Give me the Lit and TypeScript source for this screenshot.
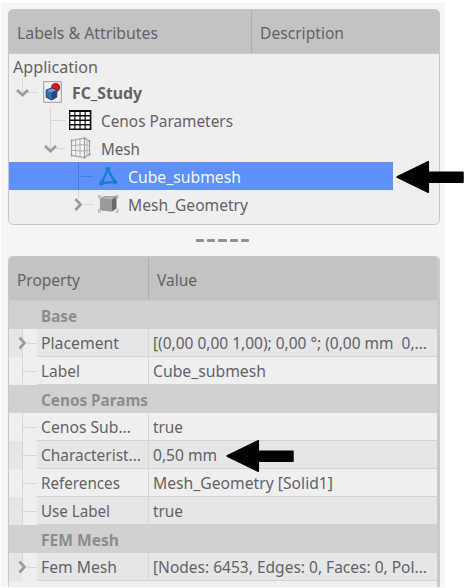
import { LitElement, html, svg, css, nothing } from "lit";
import { customElement, property } from "lit/decorators.js";

/* Text condensed or widened to an exact run width. */
@customElement("fit-text")
class FitText extends LitElement {
  @property() text = "";
  @property({ type: Number }) run = 0;
  static styles = css`
    :host { display: block; height: 24px; flex: none; }
    .t { display: inline-block; white-space: pre; line-height: 24px; transform-origin: 0 50%; }
  `;
  firstUpdated() {
    const t = this.renderRoot.querySelector(".t") as HTMLElement;
    const w = t.getBoundingClientRect().width;
    if (w > 0) t.style.transform = `scaleX(${this.run / w})`;
    this.style.width = `${this.run}px`;
  }
  render() {
    return html`<span class="t">${this.text}</span>`;
  }
}

const fit = (text: string, run: number) => html`<fit-text .text=${text} .run=${run}></fit-text>`;

const icons: Record<string, unknown> = {
  doc: svg`
    <rect x="0.6" y="0.6" width="17.8" height="20.8" rx="1" fill="#f1f1f1" stroke="#aaa" stroke-width="1.2"/>
    <circle cx="12.6" cy="6.6" r="4.6" fill="#d81620"/>
    <path d="M12 2.6a4.6 4.6 0 0 1 4 6" fill="none" stroke="#a5101a" stroke-width="1"/>
    <path d="M3.2 9.2 9 6.8l4.8 2.2v7L8.6 19l-5.4-2.8z" fill="#3b70aa" stroke="#1d3c66" stroke-width="1"/>
    <path d="M3.8 9.5 9 7.4l4.2 1.8-4.8 2z" fill="#729fcf"/>
    <path d="M8.6 11.5 13.6 9v7l-5 2.8z" fill="#204a87"/>`,
  table: svg`
    <rect x="0" y="0" width="22.4" height="20" fill="#0c0c0c"/>
    ${[0, 1, 2, 3].map((r) => [0, 1, 2, 3].map((c) =>
      svg`<rect x=${1.3 + c * 5.15} y=${2 + r * 4.5} width="4" height="3" fill="#fff"/>`))}`,
  mesh: svg`
    <path d="M1.5 3.5 14.5 1V20.5L1.5 18.5zM14.5 1 19.5 4V17.5L14.5 20.5" fill="#f4f4f4" stroke="#a0a0a0" stroke-width="1.2"/>
    <path d="M5.7 2.8V19M10 2V19.8M1.5 8.6 14.5 7.6 19.5 8.6M1.5 13.4 14.5 14 19.5 12.8M17 2.6V19" fill="none" stroke="#adadad" stroke-width="1"/>
    <g fill="#999"><circle cx="1.7" cy="3.6" r="1.1"/><circle cx="14.5" cy="1.4" r="1.2"/><circle cx="19.5" cy="4.3" r="1.1"/><circle cx="1.7" cy="18.3" r="1.1"/><circle cx="14.5" cy="20.4" r="1.2"/><circle cx="19.5" cy="17.4" r="1.1"/></g>`,
  tri: svg`
    <path d="M8.8 2.6 16 15 2.6 16z" fill="none" stroke="#1f7ecb" stroke-width="2.5"/>
    <g fill="#1a7bc8"><circle cx="8.8" cy="2.5" r="2.4"/><circle cx="16" cy="15.1" r="2.4"/><circle cx="2.6" cy="16" r="2.4"/></g>`,
  cube: svg`
    <path d="M.7 3.5V.8H3M17.5 .8h2.3V3.5M.7 14v2.8H3M17.5 16.8h2.3V14" fill="none" stroke="#aaa" stroke-width="1.2"/>
    <path d="M2.3 3.2 6 1.6H18.2V13.6L14 16.2 2.3 15z" fill="#9a9a9a" stroke="#858585" stroke-width=".6"/>
    <path d="M2.6 3.3 6 1.9H18L14 4.2z" fill="#b9b9b9"/>
    <path d="M14 4.2 18.2 1.8V13.5L14 16.1z" fill="#6a6a6a"/>`,
};

interface Node { label: string; run: number; gap: number; line: number; half: boolean; open?: string; icon: string; iw: number; ih: number; selected?: boolean; bold?: boolean; }

/* gap: distance from the tree's left edge to the icon; line: x of the branch line. */
const nodes: Node[] = [
  { label: "FC_Study", run: 70, gap: 34, line: 13, half: true, open: "down", icon: "doc", iw: 19, ih: 22, bold: true },
  { label: "Cenos Parameters", run: 132, gap: 60, line: 41, half: false, icon: "table", iw: 22.5, ih: 20 },
  { label: "Mesh", run: 39, gap: 61, line: 41, half: true, open: "down", icon: "mesh", iw: 21, ih: 22 },
  { label: "Cube_submesh", run: 113, gap: 90, line: 69, half: false, icon: "tri", iw: 19, ih: 19, selected: true },
  { label: "Mesh_Geometry", run: 120, gap: 89, line: 69, half: true, open: "right", icon: "cube", iw: 20.5, ih: 18 },
];

interface Prop { name: string; run: number; value?: string; vrun?: number; group?: boolean; alt?: boolean; open?: boolean; }
const props: Prop[] = [
  { name: "Base", run: 36, group: true },
  { name: "Placement", run: 78, value: "[(0,00 0,00 1,00); 0,00 °; (0,00 mm  0,...", vrun: 274, alt: true, open: true },
  { name: "Label", run: 39, value: "Cube_submesh", vrun: 113 },
  { name: "Cenos Params", run: 107, group: true },
  { name: "Cenos Sub...", run: 90, value: "true", vrun: 30 },
  { name: "Characterist...", run: 100, value: "0,50 mm", vrun: 64, alt: true },
  { name: "References", run: 79, value: "Mesh_Geometry [Solid1]", vrun: 180 },
  { name: "Use Label", run: 69, value: "true", vrun: 30, alt: true },
  { name: "FEM Mesh", run: 78, group: true },
  { name: "Fem Mesh", run: 76, value: "[Nodes: 6453, Edges: 0, Faces: 0, Pol...", vrun: 274, alt: true, open: true },
];

@customElement("app-root")
class AppRoot extends LitElement {
  static styles = css`
    :host { display: block; width: 467px; height: 588px; background: #fff; overflow: hidden; position: relative;
      font: 16.7px "Noto Sans", "Open Sans", sans-serif; color: #626267; }
    * { box-sizing: border-box; }
    svg { display: block; flex: none; }
    .dock { width: 444px; height: 584px; margin: 0 0 0 1px; background: #f5f5f5; padding: 6px 5px 0 7px; overflow: hidden; }
    .page { padding-top: 3px; }
    .panel { border: 1px solid #c6c6c6; border-radius: 5px; overflow: hidden; background: #efefef; }
    .tree { height: 216px; }
    .head { display: grid; align-items: center; background: #c3c3c3; border-bottom: 1px solid #cbcbcb; height: 44px; }
    .tree .head { grid-template-columns: 242px 1fr; }
    .table .head { grid-template-columns: 139px 1fr; }
    .head > div { height: 100%; display: flex; align-items: center; padding: 2px 0 0 8px; }
    .head > div + div { border-left: 1px solid #adadad; }
    .app { height: 24px; padding: 1px 0 0 4px; }
    .node { height: 28px; display: flex; align-items: center; width: 383.5px; }
    .node .text { margin-left: 9.5px; padding-top: 2px; }
    .node.selected { background: #5e90fa; color: #f4f7ff; }
    .bold { font-weight: 700; }
    .guide { stroke: #d6d6d6; fill: none; stroke-width: 1; }
    .selected .guide { stroke: #4f7bd8; }
    .chev { stroke: #9c9c9c; stroke-width: 2.8; fill: none; }
    .grip { height: 31px; display: flex; justify-content: center; gap: 3px; padding: 14px 3px 0 0; }
    .grip i { width: 8.3px; height: 3px; border-radius: 1px; background: #909090; }
    .table { height: 345px; border-right: 3px solid #c9c9c9; border-bottom: 0; border-radius: 5px 5px 0 0; }
    .row { height: 28px; display: grid; grid-template-columns: 28px 111px 1fr; background: #efefef; }
    .row.alt { background: #e6e6e6; }
    .row.alt svg { background: linear-gradient(90deg, transparent 13px, #efefef 13px); }
    .row > div { border-bottom: 1px solid #d3d3d3; display: flex; align-items: center; padding: 1px 0 0 4px; }
    .row > div + div { border-left: 1px solid #d7d7d7; padding-left: 4px; }
    .row.group { background: #d1d1d1; color: #8c8c90; font-weight: 700; grid-template-columns: 1fr; }
    .row.group > div { border: 0; padding-left: 32px; }
    .pointer { position: absolute; fill: #000; stroke: #000; stroke-width: 1.5; stroke-linejoin: round; }
    .first { left: 395px; top: 160px; }
    .second { left: 225px; top: 439px; }
  `;

  chevron(dir: string, x: number, y: number) {
    return dir === "down"
      ? svg`<path class="chev" d="M${x - 5.5} ${y - 2.5}l5.5 5 5.5-5"/>`
      : svg`<path class="chev" d="M${x - 3} ${y - 5.5}l5 5.5-5 5.5"/>`;
  }

  node(n: Node) {
    const x = n.line + 0.5;
    return html`<div class="node ${n.selected ? "selected" : ""} ${n.bold ? "bold" : ""}">
      <svg width=${n.gap} height="28">
        <path class="guide" d="M${x} 0V${n.half ? (n.open === "right" ? 8 : 14) : 28}M${n.open ? x + 5 : x} 14.5H${x + 15}"/>
        ${n.open ? this.chevron(n.open, x, 14.5) : nothing}
      </svg>
      <svg width=${n.iw} height=${n.ih}>${icons[n.icon]}</svg>
      <div class="text">${fit(n.label, n.run)}</div>
    </div>`;
  }

  row(p: Prop) {
    if (p.group) return html`<div class="row group"><div>${fit(p.name, p.run)}</div></div>`;
    return html`<div class="row ${p.alt ? "alt" : ""}">
      <svg width="28" height="28">
        <path class="guide" d="M13.5 0V${p.name === "Fem Mesh" ? 8 : 28}M${p.open ? 18 : 13} 14.5H28"/>
        ${p.open ? this.chevron("right", 13.5, 14) : nothing}
      </svg>
      <div>${fit(p.name, p.run)}</div>
      <div>${fit(p.value!, p.vrun!)}</div>
    </div>`;
  }

  arrow(cls: string) {
    return html`<svg class="pointer ${cls}" width="70" height="34">
      <path d="M2 17 33.3 1.7V12.3H68V22.3H33.3V32.3z"/>
    </svg>`;
  }

  render() {
    return html`
      <div class="page"><div class="dock">
        <div class="panel tree">
          <div class="head"><div>${fit("Labels & Attributes", 141)}</div><div>${fit("Description", 84)}</div></div>
          <div class="app">${fit("Application", 85)}</div>
          ${nodes.map((n) => this.node(n))}
        </div>
        <div class="grip"><i></i><i></i><i></i><i></i><i></i></div>
        <div class="panel table">
          <div class="head"><div>${fit("Property", 63)}</div><div>${fit("Value", 40)}</div></div>
          ${props.map((p) => this.row(p))}
        </div>
      </div></div>
      ${this.arrow("first")}${this.arrow("second")}`;
  }
}
